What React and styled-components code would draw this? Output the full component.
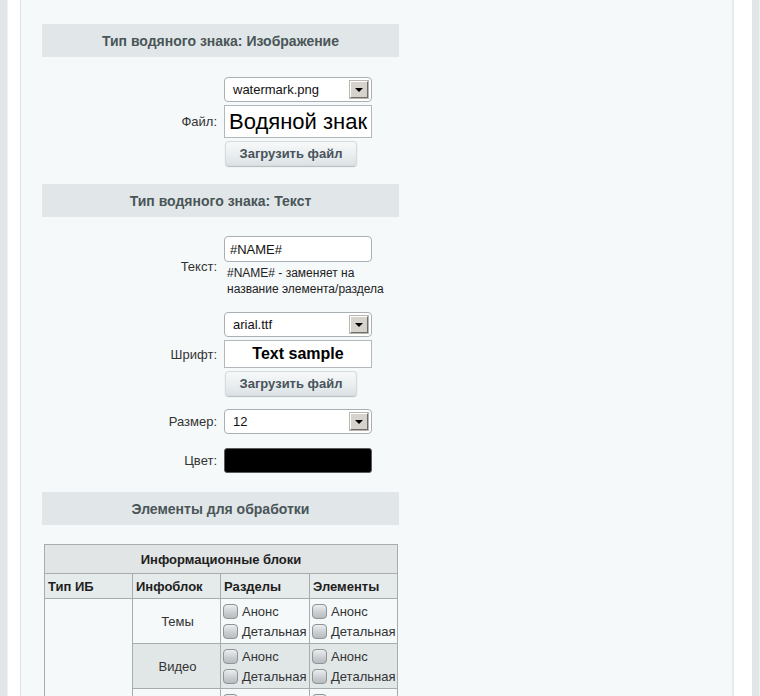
import React from 'react';
import styled, { createGlobalStyle } from 'styled-components';

const GlobalStyle = createGlobalStyle`
  html, body {
    margin: 0;
    padding: 0;
    background: #ffffff;
    font-family: "Liberation Sans", Arial, sans-serif;
  }
`;

const Page = styled.div`
  display: flex;
  min-height: 696px;
  height: 696px;
  overflow: hidden;
`;

const SideBar = styled.div`
  width: 7px;
  background: #e1e6e8;
  border-right: 1px solid #f0f3f4;
  flex-shrink: 0;
`;

const Gutter = styled.div`
  width: ${p => p.$w}px;
  background: #ffffff;
  flex-shrink: 0;
`;

const Content = styled.div`
  flex: 1;
  background: #f5f9fa;
  border-left: 1px solid #dde4e6;
  border-right: 2px solid #e6ecee;
  padding: 24px 0 0 21px;
`;

const Column = styled.div`
  width: 357px;
  display: flex;
  flex-direction: column;
`;

const SectionHeader = styled.div`
  height: 33px;
  background: #e1e7e9;
  color: #4a5558;
  font-size: 14px;
  font-weight: bold;
  display: flex;
  align-items: center;
  justify-content: center;
  margin-top: ${p => p.$top || 0}px;
`;

const FormRow = styled.div`
  display: grid;
  grid-template-columns: 175px 148px;
  column-gap: 7px;
  align-items: center;
  margin-top: ${p => p.$top || 0}px;
`;

const Label = styled.div`
  text-align: right;
  font-size: 13px;
  color: #333;
`;

const Controls = styled.div`
  display: flex;
  flex-direction: column;
  align-items: flex-start;
  gap: 3px;
`;

const Select = styled.div`
  box-sizing: border-box;
  width: 148px;
  height: 25px;
  background: #fff;
  border: 1px solid #a9b0b4;
  border-radius: 4px;
  display: flex;
  align-items: center;
  justify-content: space-between;
  padding: 0 3px 0 8px;
  font-size: 13px;
  color: #111;
`;

const Arrow = styled.span`
  box-sizing: border-box;
  width: 18px;
  height: 17px;
  background: #d6d3cd;
  border: 1px solid;
  border-color: #ffffff #6f6d69 #6f6d69 #ffffff;
  box-shadow: 0 0 0 1px #b9b6b0;
  display: flex;
  align-items: center;
  justify-content: center;

  &::after {
    content: '';
    border-left: 4px solid transparent;
    border-right: 4px solid transparent;
    border-top: 4px solid #000;
    margin-top: 1px;
  }
`;

const Preview = styled.div`
  box-sizing: border-box;
  width: 148px;
  height: ${p => p.$h}px;
  background: #fff;
  border: 1px solid #b2b8bb;
  display: flex;
  align-items: center;
  justify-content: ${p => (p.$center ? 'center' : 'flex-start')};
  padding-left: ${p => (p.$center ? 0 : 4)}px;
  font-size: ${p => p.$size}px;
  font-weight: ${p => (p.$bold ? 'bold' : 'normal')};
  color: #000;
  white-space: nowrap;
  overflow: hidden;
`;

const Button = styled.button`
  box-sizing: border-box;
  width: 132px;
  height: 25px;
  margin-left: 1px;
  border: none;
  border-radius: 4px;
  background: linear-gradient(to bottom, #f9fafa 0%, #e9eef0 55%, #dbe1e4 100%);
  box-shadow: 0 1px 1px rgba(0, 0, 0, 0.25), inset 0 0 0 1px #d5dcdf;
  font-family: "Liberation Sans", Arial, sans-serif;
  font-size: 13px;
  font-weight: bold;
  color: #48535a;
  padding: 0;
`;

const TextInput = styled.div`
  box-sizing: border-box;
  width: 148px;
  height: 26px;
  background: #fff;
  border: 1px solid #a9b0b4;
  border-radius: 4px;
  display: flex;
  align-items: center;
  padding-left: 5px;
  font-size: 13px;
  color: #111;
`;

const Hint = styled.div`
  font-size: 12px;
  line-height: 16px;
  color: #222;
  padding-left: 3px;
  white-space: nowrap;
`;

const ColorBox = styled.div`
  box-sizing: border-box;
  width: 148px;
  height: 25px;
  background: #000;
  border: 1px solid #5a5a5a;
  border-radius: 3px;
`;

const Table = styled.table`
  margin: 19px 0 0 2px;
  width: 353px;
  border-collapse: collapse;
  table-layout: fixed;
  font-size: 13px;
  color: #222;
`;

const Th = styled.th`
  border: 1px solid #a7acae;
  background: ${p => p.$bg};
  height: ${p => p.$h}px;
  padding: 0 3px;
  font-weight: bold;
  text-align: ${p => p.$align || 'left'};
  box-sizing: border-box;
  color: #1e1e1e;
`;

const Td = styled.td`
  border: 1px solid #a7acae;
  background: ${p => p.$bg};
  height: 45px;
  padding: 0 0 0 2px;
  text-align: ${p => p.$align || 'left'};
  vertical-align: middle;
  box-sizing: border-box;
  color: #333;
`;

const CheckLine = styled.label`
  display: flex;
  align-items: center;
  gap: 4px;
  height: 20px;
  white-space: nowrap;
`;

const Check = styled.span`
  box-sizing: border-box;
  width: 15px;
  height: 15px;
  border-radius: 4px;
  border: 1px solid #8e9498;
  background: linear-gradient(to bottom, #eceeef 0%, #c9cdd0 60%, #b7bcbf 100%);
  flex-shrink: 0;
`;

const blocks = [
  { name: 'Темы', bg: '#f5f9fa' },
  { name: 'Видео', bg: '#e1e6e7' },
  { name: 'Фото', bg: '#f5f9fa' },
];

function Checks() {
  return (
    <>
      <CheckLine><Check />Анонс</CheckLine>
      <CheckLine><Check />Детальная</CheckLine>
    </>
  );
}

export default function App() {
  return (
    <>
      <GlobalStyle />
      <Page>
        <SideBar />
        <Gutter $w={12} />
        <Content>
          <Column>
            <SectionHeader>Тип водяного знака: Изображение</SectionHeader>
            <FormRow $top={20}>
              <Label>Файл:</Label>
              <Controls>
                <Select>watermark.png<Arrow /></Select>
                <Preview $h={33} $size={22}>Водяной знак</Preview>
                <Button>Загрузить файл</Button>
              </Controls>
            </FormRow>

            <SectionHeader $top={18}>Тип водяного знака: Текст</SectionHeader>
            <FormRow $top={19}>
              <Label>Текст:</Label>
              <Controls>
                <TextInput>#NAME#</TextInput>
                <Hint>#NAME# - заменяет на<br />название элемента/раздела</Hint>
              </Controls>
            </FormRow>
            <FormRow $top={15}>
              <Label>Шрифт:</Label>
              <Controls>
                <Select>arial.ttf<Arrow /></Select>
                <Preview $h={28} $size={16} $bold $center>Text sample</Preview>
                <Button>Загрузить файл</Button>
              </Controls>
            </FormRow>
            <FormRow $top={13}>
              <Label>Размер:</Label>
              <Select>12<Arrow /></Select>
            </FormRow>
            <FormRow $top={14}>
              <Label>Цвет:</Label>
              <ColorBox />
            </FormRow>

            <SectionHeader $top={19}>Элементы для обработки</SectionHeader>
            <Table>
              <colgroup>
                <col style={{ width: 88 }} />
                <col style={{ width: 88 }} />
                <col style={{ width: 89 }} />
                <col style={{ width: 88 }} />
              </colgroup>
              <thead>
                <tr>
                  <Th colSpan={4} $bg="#e2e5e5" $h={29} $align="center">Информационные блоки</Th>
                </tr>
                <tr>
                  <Th $bg="#e5eaeb" $h={25}>Тип ИБ</Th>
                  <Th $bg="#e5eaeb" $h={25}>Инфоблок</Th>
                  <Th $bg="#e5eaeb" $h={25}>Разделы</Th>
                  <Th $bg="#e5eaeb" $h={25}>Элементы</Th>
                </tr>
              </thead>
              <tbody>
                {blocks.map((b, i) => (
                  <tr key={b.name}>
                    {i === 0 && <Td rowSpan={blocks.length} $bg="#f5f9fa" />}
                    <Td $bg={b.bg} $align="center">{b.name}</Td>
                    <Td $bg={b.bg}><Checks /></Td>
                    <Td $bg={b.bg}><Checks /></Td>
                  </tr>
                ))}
              </tbody>
            </Table>
          </Column>
        </Content>
        <Gutter $w={18} />
        <SideBar />
      </Page>
    </>
  );
}
